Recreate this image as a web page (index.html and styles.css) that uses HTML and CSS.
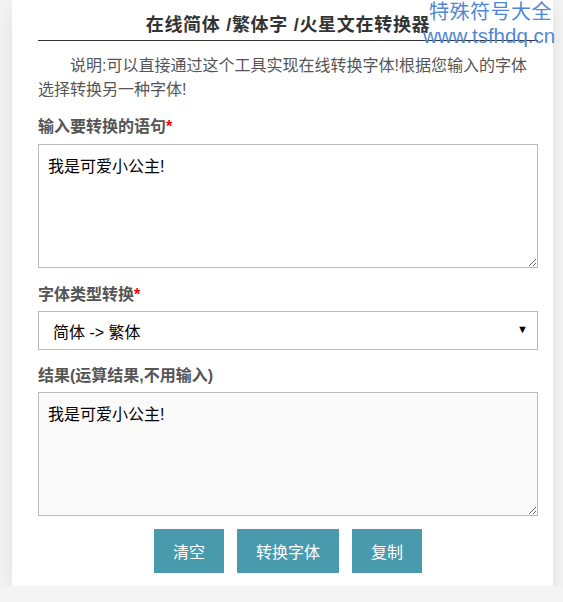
FILE: index.html
```html
<!DOCTYPE html>
<html lang="zh-CN">
<head>
  <meta charset="UTF-8">
  <title>在线简体/繁体字/火星文在转换器</title>
  <link rel="stylesheet" href="styles.css">
</head>
<body>

  <div class="box">
    <h1 class="title">在线简体 /繁体字 /火星文在转换器</h1>
    <p class="desc">说明:可以直接通过这个工具实现在线转换字体!根据您输入的字体选择转换另一种字体!</p>

    <div class="field-label">输入要转换的语句<span class="req">*</span></div>
    <textarea class="txt" id="src">我是可爱小公主!</textarea>

    <div class="field-label second">字体类型转换<span class="req">*</span></div>
    <div class="sel-wrap">
      <select class="sel" id="mode">
        <option value="s2t">简体 -&gt; 繁体</option>
        <option value="t2s">繁体 -&gt; 简体</option>
        <option value="mars">简体 -&gt; 火星文</option>
      </select>
    </div>

    <div class="field-label third">结果(运算结果,不用输入)</div>
    <textarea class="txt result" id="out" readonly>我是可爱小公主!</textarea>

    <div class="btns">
      <button class="btn" onclick="document.getElementById('src').value=''">清空</button>
      <button class="btn">转换字体</button>
      <button class="btn">复制</button>
    </div>
  </div>

  <!-- 水印 -->
  <div class="mark">
    <div class="mark-cn">特殊符号大全</div>
    <div class="mark-en">www.tsfhdq.cn</div>
  </div>

</body>
</html>
```

FILE: styles.css
```css
body {
  margin: 0;
  background: #f4f4f4;
  font-family: "Liberation Sans", Arial, "Noto Sans CJK SC", sans-serif;
  color: #444;
}
.box {
  width: 500px;
  margin-left: 12px;
  padding: 0 15px 13px 26px;
  background: #fff;
  box-shadow: 0 8px 20px rgba(0, 0, 0, 0.09);
}
.title {
  margin: 0;
  padding: 13px 0 3px;
  font-size: 18px;
  line-height: 24px;
  letter-spacing: 0.7px;
  text-align: center;
  color: #333;
  border-bottom: 1px solid #333;
}
.desc {
  margin: 13px 0 0;
  font-size: 16px;
  line-height: 24px;
  text-indent: 2em;
  color: #555;
}
.field-label {
  margin: 13px 0 5px;
  font-size: 16px;
  line-height: 24px;
  font-weight: bold;
  color: #555;
}
.field-label.second { margin: 15px 0 4px; }
.field-label.third { margin: 14px 0 4px; }
.req { color: #f00; }
.txt {
  display: block;
  box-sizing: border-box;
  width: 500px;
  height: 124px;
  margin: 0;
  padding: 10px 9px;
  border: 1px solid #bbb;
  font-family: "Liberation Sans", Arial, "Noto Sans CJK SC", sans-serif;
  font-size: 16px;
  line-height: 24px;
  color: #000;
  background: #fff;
}
.result { background: #fafafa; }
.sel-wrap {
  position: relative;
}
.sel-wrap::after {
  content: "\25BC";
  position: absolute;
  right: 10px;
  top: 12px;
  font-size: 11px;
  color: #000;
  pointer-events: none;
}
.sel {
  display: block;
  box-sizing: border-box;
  width: 500px;
  height: 39px;
  padding: 3px 14px 0;
  border: 1px solid #bbb;
  border-radius: 0;
  background: #fff;
  appearance: none;
  -webkit-appearance: none;
  font-family: "Liberation Sans", Arial, "Noto Sans CJK SC", sans-serif;
  font-size: 16px;
  color: #000;
}
.btns {
  display: flex;
  justify-content: center;
  gap: 13px;
  margin-top: 13px;
}
.btn {
  height: 44px;
  padding: 0 19px;
  border: 0;
  background: #4a9aad;
  color: #fff;
  font-family: "Liberation Sans", Arial, "Noto Sans CJK SC", sans-serif;
  font-size: 16px;
  cursor: pointer;
}
.mark {
  position: absolute;
  top: 0;
  left: 423px;
  color: #4f87d6;
  font-size: 20px;
  line-height: 24px;
}
.mark-cn {
  padding-left: 6px;
  letter-spacing: 0.5px;
}
.mark-en {
  font-size: 20.5px;
}
```
